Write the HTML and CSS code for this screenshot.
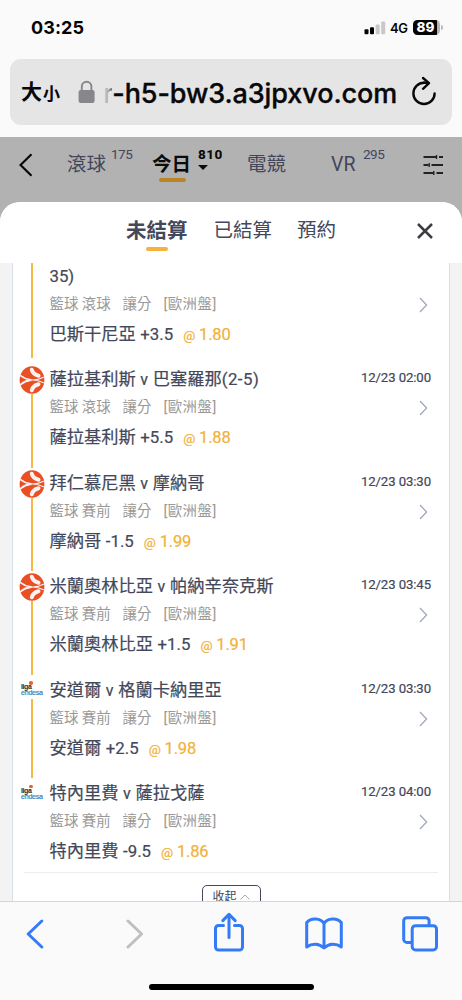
FILE: index.html
```html
<!DOCTYPE html>
<html lang="zh-Hant">
<head>
<meta charset="utf-8">
<meta name="viewport" content="width=device-width">
<title>未結算</title>
<link rel="stylesheet" href="styles.css">
</head>
<body>
<svg class="defs" aria-hidden="true">
  <symbol id="ball" viewBox="0 0 26 28">
    <ellipse cx="13" cy="14" rx="12.4" ry="13.8" fill="#e94e24"/>
    <g fill="none" stroke="#f8f2f0" stroke-linecap="round" stroke-linejoin="round">
      <path d="M1.500 9.600Q6 13.200 12 14Q6 14.800 1.500 18.600" stroke-width="1.8"/>
      <path d="M12 14Q19 14.300 24.500 11.300M12 14Q19 13.700 24.500 16.700" stroke-width="1.1"/>
      <path d="M12.800 3.800Q14 8.300 19.500 9.700" stroke-width="4"/>
      <path d="M12.800 24.200Q14 19.700 19.500 18.300" stroke-width="4"/>
    </g>
  </symbol>
  <symbol id="next" viewBox="0 0 9 16"><path d="M1 1l6.6 7L1 15" fill="none" stroke="#a3a9bc" stroke-width="1.3"/></symbol>
</svg>
<div class="screen">
  <div class="status">
    <span class="clock">03:25</span>
    <svg class="signal" width="22" height="14" viewBox="0 0 22 14">
      <rect x="0.5" y="8.3" width="4" height="4.9" rx="1"/><rect x="6" y="6.3" width="4" height="6.9" rx="1"/>
      <rect x="11.7" y="3.4" width="4" height="9.8" rx="1" fill="#c8c8c8"/><rect x="17.2" y="0.4" width="4" height="12.8" rx="1" fill="#c8c8c8"/>
    </svg>
    <span class="net">4G</span>
    <span class="battery"><b>89</b></span><i class="cap"></i>
  </div>
  <div class="address">
    <span class="size-big">大</span><span class="size-small">小</span>
    <svg class="lock" width="17" height="24" viewBox="0 0 17 24"><rect x="0.6" y="10" width="16" height="13" rx="2.2" fill="#86868b"/><path d="M3.8 11V6.5a4.8 4.8 0 0 1 9.6 0V11" fill="none" stroke="#86868b" stroke-width="1.9"/></svg>
    <span class="url"><span class="fade">r</span>-h5-bw3.a3jpxvo.com</span>
    <svg class="reload" width="26" height="30" viewBox="0 0 26 30" fill="none" stroke="#080808" stroke-width="2.4" stroke-linecap="round" stroke-linejoin="round"><path d="M13 6.8A10.6 10.6 0 1 0 23.6 17.4"/><path d="M12 2l6 5.2-6 5.6"/><path d="M13 6.8h4"/></svg>
  </div>
  <div class="nav">
    <svg class="back" width="14" height="24" viewBox="0 0 14 24"><path d="M12.5 1.2L1.5 12l11 10.8" fill="none" stroke="#080808" stroke-width="2.2"/></svg>
    <span class="nav-item rolling">滾球<sup>175</sup></span>
    <span class="nav-item today">今日<sup>810</sup><i class="caret"></i></span>
    <span class="nav-item esports">電競</span>
    <span class="nav-item vr">VR<sup>295</sup></span>
    <svg class="filters" width="21" height="20" viewBox="0 0 21 20" fill="none" stroke="#222" stroke-width="1.9"><path d="M0.5 2h13M16 2h4M0.5 10h5M8.5 10H20M0.5 18h10M13.5 18H20"/><path d="M13.5 0v4M6.2 8v4M10.8 16v4" stroke-width="1.4"/></svg>
  </div>
  <div class="sheet">
    <div class="tabs">
      <span class="tab active">未結算</span><span class="tab">已結算</span><span class="tab">預約</span>
      <svg class="close" width="16" height="16" viewBox="0 0 16 16"><path d="M1 1l14 14M15 1L1 15" stroke="#3c3d42" stroke-width="2.5"/></svg>
    </div>
    <div class="list">
      <div class="bet first">
        <div class="rail"><i class="line"></i></div>
        <div class="info"><div class="title"><span class="n">35)</span></div><div class="meta"><span>籃球</span><span>滾球</span><span>讓分</span><span>[歐洲盤]</span></div><div class="pick">巴斯干尼亞 <span class="n">+3.5</span><span class="odds"><small>@</small>1.80</span></div></div>
        <div class="side"><time></time><svg class="go"><use href="#next"/></svg></div>
      </div>
      <div class="bet">
        <div class="rail"><svg class="ball"><use href="#ball"/></svg><i class="line"></i></div>
        <div class="info"><div class="title">薩拉基利斯 <span class="v">v</span> 巴塞羅那<span class="n score">(2-5)</span></div><div class="meta"><span>籃球</span><span>滾球</span><span>讓分</span><span>[歐洲盤]</span></div><div class="pick">薩拉基利斯 <span class="n">+5.5</span><span class="odds"><small>@</small>1.88</span></div></div>
        <div class="side"><time>12/23 02:00</time><svg class="go"><use href="#next"/></svg></div>
      </div>
      <div class="bet">
        <div class="rail"><svg class="ball"><use href="#ball"/></svg><i class="line"></i></div>
        <div class="info"><div class="title">拜仁慕尼黑 <span class="v">v</span> 摩納哥</div><div class="meta"><span>籃球</span><span>賽前</span><span>讓分</span><span>[歐洲盤]</span></div><div class="pick">摩納哥 <span class="n">-1.5</span><span class="odds"><small>@</small>1.99</span></div></div>
        <div class="side"><time>12/23 03:30</time><svg class="go"><use href="#next"/></svg></div>
      </div>
      <div class="bet">
        <div class="rail"><svg class="ball"><use href="#ball"/></svg><i class="line"></i></div>
        <div class="info"><div class="title">米蘭奧林比亞 <span class="v">v</span> 帕納辛奈克斯</div><div class="meta"><span>籃球</span><span>賽前</span><span>讓分</span><span>[歐洲盤]</span></div><div class="pick">米蘭奧林比亞 <span class="n">+1.5</span><span class="odds"><small>@</small>1.91</span></div></div>
        <div class="side"><time>12/23 03:45</time><svg class="go"><use href="#next"/></svg></div>
      </div>
      <div class="bet">
        <div class="rail"><span class="liga"><b>liga</b><i class="dot"></i><em>endesa</em></span><i class="line"></i></div>
        <div class="info"><div class="title">安道爾 <span class="v">v</span> 格蘭卡納里亞</div><div class="meta"><span>籃球</span><span>賽前</span><span>讓分</span><span>[歐洲盤]</span></div><div class="pick">安道爾 <span class="n">+2.5</span><span class="odds"><small>@</small>1.98</span></div></div>
        <div class="side"><time>12/23 03:30</time><svg class="go"><use href="#next"/></svg></div>
      </div>
      <div class="bet last">
        <div class="rail"><span class="liga"><b>liga</b><i class="dot"></i><em>endesa</em></span></div>
        <div class="info"><div class="title">特內里費 <span class="v">v</span> 薩拉戈薩</div><div class="meta"><span>籃球</span><span>賽前</span><span>讓分</span><span>[歐洲盤]</span></div><div class="pick">特內里費 <span class="n">-9.5</span><span class="odds"><small>@</small>1.86</span></div></div>
        <div class="side"><time>12/23 04:00</time><svg class="go"><use href="#next"/></svg></div>
      </div>
      <div class="fold-row"><span class="fold">收起<svg width="10" height="6" viewBox="0 0 10 6"><path d="M0.5 5.5L5 1l4.5 4.5" fill="none" stroke="#a3a9bc"/></svg></span></div>
    </div>
  </div>
  <div class="toolbar">
    <div class="tools">
      <svg width="18" height="30" viewBox="0 0 18 30"><path d="M15.8 2L2.2 15l13.6 13" class="ico"/></svg>
      <svg width="18" height="30" viewBox="0 0 18 30"><path d="M2 2l13.6 13L2 28" class="ico off"/></svg>
      <svg class="share" width="32" height="40" viewBox="0 0 32 40"><path d="M10.5 13.5H5.5a3 3 0 0 0-3 3V35a3 3 0 0 0 3 3h21a3 3 0 0 0 3-3V16.500a3 3 0 0 0-3-3h-5M16 25.500V2.800M9.800 8.600L16 2.300 22.200 8.600" class="ico"/></svg>
      <svg width="38" height="33" viewBox="0 0 38 33"><path d="M19 6.500C15.500 1 6 0.600 1.700 5.500V30C7 26.200 14 26.200 19 31 24 26.200 31 26.200 36.300 30V5.500C32 0.600 22.500 1 19 6.500V30.500" class="ico"/></svg>
      <svg width="36" height="36" viewBox="0 0 36 36"><path d="M9.500 26.500H5a3.300 3.300 0 0 1-3.300-3.300V5A3.300 3.300 0 0 1 5 1.700H23.800A3.300 3.300 0 0 1 27.100 5V9.500" class="ico"/><rect x="10.200" y="9.700" width="24.300" height="24.300" rx="3.300" class="ico"/></svg>
    </div>
    <i class="home"></i>
  </div>
</div>
</body>
</html>
```
FILE: styles.css
```css
* { box-sizing: border-box; }
body { margin: 0; font-family: Roboto, "Noto Sans CJK TC", sans-serif; color: #43485a; background: #fafafb; }
svg { display: block; flex: none; }
i, em { font-style: normal; }
.defs { position: absolute; width: 0; height: 0; }
.screen { width: 462px; height: 1000px; display: flex; flex-direction: column; overflow: hidden; }

.status { height: 59px; flex: none; display: flex; align-items: center; padding: 0 19px 4px 31px; font-family: Inter, sans-serif; color: #050505; }
.clock { font-size: 18px; font-weight: 700; letter-spacing: 0.1px; margin-right: auto; }
.net { font-size: 13px; font-weight: 600; margin: 0 5px 0 4px; width: 18px; letter-spacing: -0.3px; }
.battery { width: 27px; height: 15px; border-radius: 4.5px; background: linear-gradient(90deg, #050505 24px, #b5b5b5 24px); color: #fff; font-size: 13.5px; line-height: 15px; padding-left: 3.5px; }
.battery b { font-weight: 800; }
.cap { width: 2px; height: 5px; margin-left: 1px; border-radius: 0 2px 2px 0; background: #bbb; }

.address { height: 66px; flex: none; margin: 0 10px 0; padding: 0 15px 0 11px; border-radius: 11px; background: #e5e5e6; display: flex; align-items: center; color: #080808; white-space: nowrap; }
.size-big { font-size: 21px; font-weight: 700; line-height: 66px; }
.size-small { font-size: 17px; font-weight: 700; line-height: 66px; padding-top: 3px; margin-left: 1px; }
.lock { margin: 0 0 0 18px; }
.url { font-family: Inter, sans-serif; font-size: 27px; font-weight: 500; letter-spacing: -0.1px; margin-left: 8px; line-height: 66px; padding-top: 3px; flex: 1; -webkit-text-stroke: 0.35px #080808; }
.fade { background: linear-gradient(90deg, #e5e5e6, #777); background-clip: text; color: transparent; -webkit-text-stroke: 0; }
.reload { margin-top: -3px; }

.nav { height: 85px; flex: none; margin-top: 12px; padding: 0 18px 0 19px; background: #b2b2b2; display: grid; grid-template-columns: 48px 85px 95px 84px 92px 21px; align-items: start; font-size: 19.5px; color: #42465a; }
.back { margin-top: 16px; }
.nav-item { position: relative; line-height: 28px; margin-top: 14px; white-space: nowrap; }
.nav-item sup { position: absolute; left: 44px; top: -9px; font-size: 13.5px; line-height: 24px; letter-spacing: -0.5px; }
.vr sup { left: 32px; }
.today { font-weight: 700; color: #0b0b0b; }
.today sup { left: 46px; font-weight: 800; letter-spacing: 0.5px; }
.today::after { content: ""; position: absolute; left: 7px; top: 27px; width: 27px; height: 4px; border-radius: 2px; background: #bb8427; }
.caret { position: absolute; left: 46px; top: 14px; border: 5px solid transparent; border-top-color: #0b0b0b; border-bottom: 0; }
.filters { margin-top: 18px; }

.sheet { height: 699px; flex: none; margin-top: -20px; position: relative; border-radius: 20px 20px 0 0; background: #f3f3f4; overflow: hidden; }
.tabs { height: 61px; background: #fff; display: flex; padding: 15px 29px 0 126px; gap: 26px; font-size: 19.5px; line-height: 28px; }
.tab { position: relative; }
.tab:nth-child(3) { margin-left: -1px; }
.tab.active { font-weight: 700; font-size: 20.5px; }
.tab.active::after { content: ""; position: absolute; left: 20px; top: 30px; width: 22px; height: 4px; border-radius: 2px; background: #f4b33d; }
.close { margin: 6px 0 0 auto; }
.list { height: 638px; margin: 0 12px; border: 1px solid #d9deeb; border-width: 0 1px; background: #fff; overflow: hidden; }

.bet { height: 103.5px; display: grid; grid-template-columns: 36.5px 1fr 90px; padding-right: 18px; white-space: nowrap; }
.first { margin-top: -2.5px; }
.last { height: 93.5px; }
.rail { display: flex; flex-direction: column; align-items: center; padding-top: 2px; width: 38px; height: 103.5px; }
.last .rail { height: auto; }
.ball { width: 26px; height: 28px; }
.line { width: 2px; flex: 1; background: #f7b945; }
.first .line { flex: none; height: 95px; }
.liga { position: relative; width: 24px; height: 22.5px; padding: 7.5px 0 0 1px; display: flex; flex-direction: column; font-family: "Liberation Sans", sans-serif; }
.liga b { font-size: 7px; line-height: 6px; letter-spacing: -0.4px; color: #252525; }
.liga em { font-size: 7px; line-height: 6px; letter-spacing: -0.2px; color: #3582bc; -webkit-text-stroke: 0.2px; }
.liga .dot { position: absolute; left: 9px; top: 4.5px; width: 3.5px; height: 3.5px; border-radius: 50%; background: #e9622c; }
.title, .pick { font-size: 17.25px; line-height: 30px; height: 30px; word-spacing: 0.3px; -webkit-text-stroke: 0.2px; }
.title .n, .pick .n { font-size: 16.8px; }
.title .score { letter-spacing: 0.5px; }
.v { font-size: 16px; }
.meta { display: flex; font-size: 14.4px; line-height: 28px; height: 26px; color: #999; }
.meta span + span { margin-left: 3.500px; }
.meta span:nth-child(3) { margin-left: 12px; }
.meta span:nth-child(4) { margin-left: 12px; letter-spacing: 0.5px; }
.pick { line-height: 34px; }
.odds { font-size: 16.5px; color: #f2b139; margin-left: 10px; letter-spacing: -0.2px; }
.odds small { font-size: 13.5px; margin-right: 4px; }
.side { display: flex; flex-direction: column; align-items: flex-end; }
time { font-size: 13.2px; line-height: 27px; height: 36px; letter-spacing: -0.1px; -webkit-text-stroke: 0.2px; }
.go { width: 9px; height: 16px; margin-right: 3px; }
.fold-row { margin: 0 11px; border-top: 1px solid #eee; padding-top: 12.5px; display: flex; justify-content: center; }
.fold { width: 59px; height: 23px; border: 1.500px solid #43485a; border-radius: 5px; display: flex; align-items: center; justify-content: center; gap: 3px; font-size: 12px; line-height: 18px; }

.toolbar { height: 99px; flex: none; border-top: 1px solid #d5d5d8; background: #fafafb; display: flex; flex-direction: column; align-items: center; }
.tools { height: 63px; width: 100%; padding: 0 24px 0 26px; display: grid; grid-template-columns: 100px 87px 92px 97px 36px; align-items: center; }
.share { margin-top: -4px; }
.ico { fill: none; stroke: #347bf6; stroke-width: 3; stroke-linecap: round; stroke-linejoin: round; }
.ico.off { stroke: #bfbfc0; }
.home { width: 165px; height: 6px; margin-top: 19px; border-radius: 3px; background: #000; }
```
